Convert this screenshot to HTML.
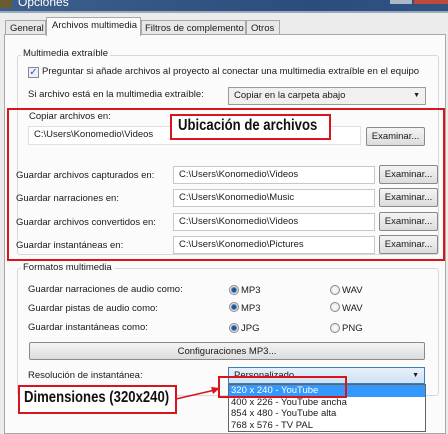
<!DOCTYPE html><html><head><meta charset="utf-8"><style>
*{margin:0;padding:0;box-sizing:border-box}
body{width:448px;height:432px;overflow:hidden;background:#ececec;font-family:"Liberation Sans","DejaVu Sans",sans-serif;font-size:9.5px;color:#1a1a1a;position:relative}
.a{position:absolute;white-space:nowrap}
.inp{position:absolute;background:#fff;border:1px solid #c8c8c8;padding-left:5px;line-height:16px;white-space:nowrap}
.btn{position:absolute;border:1px solid #8a8a8a;border-radius:2px;background:linear-gradient(#f4f4f4,#dcdcdc);text-align:center;line-height:17px;white-space:nowrap}
.grp{position:absolute;border:1px solid #d8d8d8;border-radius:3px}
.rad{position:absolute;width:10px;height:10px;border-radius:50%;border:1px solid #8a8a8a;background:radial-gradient(#fff,#ddd)}
.rad.on{background:radial-gradient(#1d4f8f 25%,#5b8ac0 45%,#e8e8e8 60%)}
.red{position:absolute;border:2px solid #d8141c}
.big{position:absolute;white-space:nowrap;font-weight:bold;font-size:16px;color:#111;display:block;transform-origin:0 0;transform:scaleX(0.82)}
</style></head><body>
<div class="a" style="left:0;top:0;width:448px;height:11px;background:linear-gradient(90deg,#3d5f8c,#2b4d7d 70%,#2f5383)"></div>
<div class="a" style="left:0;top:0;width:12px;height:8px;background:#6a5a30"></div>
<div class="a" style="left:18px;top:-5px;color:#fff;font-size:12px">Opciones</div>
<div class="a" style="left:390px;top:0;width:22px;height:4px;background:#aab8c8"></div>
<div class="a" style="left:414px;top:0;width:34px;height:4px;background:#c04a3a"></div>
<div class="a" style="left:0;top:11px;width:448px;height:2px;background:#9aa8b8"></div>
<div class="a" style="left:4px;top:34px;width:442px;height:400px;background:#fbfbfb;border:1px solid #a8a8a8"></div>
<div class="a" style="left:5px;top:20px;width:41px;height:15px;border:1px solid #a8a8a8;background:#e8e8e8;padding:2px 0 0 4px">General</div>
<div class="a" style="left:46px;top:17px;width:95px;height:19px;border:1px solid #a8a8a8;border-bottom:none;background:#fbfbfb;padding:2px 0 0 5px">Archivos multimedia</div>
<div class="a" style="left:141px;top:20px;width:105px;height:15px;border:1px solid #a8a8a8;background:#e8e8e8;padding:2px 0 0 3px">Filtros de complemento</div>
<div class="a" style="left:246px;top:20px;width:34px;height:15px;border:1px solid #a8a8a8;background:#e8e8e8;padding:2px 0 0 4px">Otros</div>

<div class="grp" style="left:17px;top:55px;width:422px;height:200px"></div>
<div class="a" style="left:21px;top:48px;background:#fbfbfb;padding:0 2px">Multimedia extraíble</div>
<div class="a" style="left:28px;top:67px;width:11px;height:11px;border:1px solid #8a8a8a;background:#eef;color:#2a5ea8;font-size:10px;line-height:10px;text-align:center">✓</div>
<div class="a" style="left:42px;top:66px">Preguntar si añade archivos al proyecto al conectar una multimedia extraíble en el equipo</div>
<div class="a" style="left:28px;top:89px">Si archivo está en la multimedia extraíble:</div>
<div class="inp" style="left:228px;top:87px;width:198px;height:18px;background:#f0f0f0;border-color:#9a9a9a">Copiar en la carpeta abajo<span style="position:absolute;right:5px;font-size:7px">▼</span></div>

<div class="a" style="left:29px;top:111px">Copiar archivos en:</div>
<div class="inp" style="left:28px;top:126px;width:333px;height:19px;border-color:#e0e0e0">C:\Users\Konomedio\Videos</div>
<div class="btn" style="left:366px;top:127px;width:59px;height:19px">Examinar...</div>
<div class="red" style="left:170px;top:114px;width:161px;height:26px;background:#fff"></div>
<span class="big" style="left:178px;top:117px">Ubicación de archivos</span>

<div class="a" style="left:16px;top:170px">Guardar archivos capturados en:</div>
<div class="inp" style="left:173px;top:166px;width:202px;height:18px">C:\Users\Konomedio\Videos</div>
<div class="btn" style="left:379px;top:165px;width:59px;height:19px">Examinar...</div>
<div class="a" style="left:16px;top:193px">Guardar narraciones en:</div>
<div class="inp" style="left:173px;top:189px;width:202px;height:18px">C:\Users\Konomedio\Music</div>
<div class="btn" style="left:379px;top:188px;width:59px;height:19px">Examinar...</div>
<div class="a" style="left:16px;top:217px">Guardar archivos convertidos en:</div>
<div class="inp" style="left:173px;top:213px;width:202px;height:18px">C:\Users\Konomedio\Videos</div>
<div class="btn" style="left:379px;top:212px;width:59px;height:19px">Examinar...</div>
<div class="a" style="left:16px;top:240px">Guardar instantáneas en:</div>
<div class="inp" style="left:173px;top:236px;width:202px;height:18px">C:\Users\Konomedio\Pictures</div>
<div class="btn" style="left:379px;top:235px;width:59px;height:19px">Examinar...</div>
<div class="red" style="left:7px;top:108px;width:438px;height:153px"></div>

<div class="grp" style="left:17px;top:268px;width:422px;height:128px"></div>
<div class="a" style="left:21px;top:262px;background:#fbfbfb;padding:0 2px">Formatos multimedia</div>
<div class="a" style="left:28px;top:284px">Guardar narraciones de audio como:</div>
<div class="rad on" style="left:229px;top:285px"></div><div class="a" style="left:241px;top:285px">MP3</div>
<div class="rad" style="left:330px;top:285px"></div><div class="a" style="left:342px;top:285px">WAV</div>
<div class="a" style="left:28px;top:303px">Guardar pistas de audio como:</div>
<div class="rad on" style="left:229px;top:302px"></div><div class="a" style="left:241px;top:303px">MP3</div>
<div class="rad" style="left:330px;top:302px"></div><div class="a" style="left:342px;top:303px">WAV</div>
<div class="a" style="left:28px;top:322px">Guardar instantáneas como:</div>
<div class="rad on" style="left:229px;top:323px"></div><div class="a" style="left:241px;top:323px">JPG</div>
<div class="rad" style="left:330px;top:323px"></div><div class="a" style="left:342px;top:323px">PNG</div>
<div class="btn" style="left:29px;top:342px;width:396px;height:18px">Configuraciones MP3...</div>
<div class="a" style="left:28px;top:370px">Resolución de instantánea:</div>
<div class="inp" style="left:228px;top:367px;width:197px;height:17px;background:linear-gradient(#e8f1fb,#cfe2f6);border-color:#3c7fb1;line-height:15px">Personalizado<span style="position:absolute;right:5px;font-size:7px">▼</span></div>
<div class="a" style="left:228px;top:384px;width:198px;height:48px;background:#fff;border:1px solid #646464;line-height:11.5px;font-size:9.5px;padding-left:2px">
<div style="background:#3399ff;color:#fff;margin-left:-2px;padding-left:2px">320 x 240 - YouTube</div>
<div>400 x 226 - YouTube ancha</div><div>854 x 480 - YouTube alta</div><div>768 x 576 - TV PAL</div></div>
<div class="red" style="left:218px;top:376px;width:129px;height:22px"></div>
<div class="red" style="left:18px;top:385px;width:159px;height:29px;background:#fff"></div>
<span class="big" style="left:24px;top:389px">Dimensiones (320x240)</span>
<svg class="a" style="left:175px;top:384px" width="50" height="20"><line x1="1" y1="15" x2="40" y2="6" stroke="#d8141c" stroke-width="1.6"/><polygon points="45,4 36,3 38,10" fill="#d8141c"/></svg>
</body></html>
